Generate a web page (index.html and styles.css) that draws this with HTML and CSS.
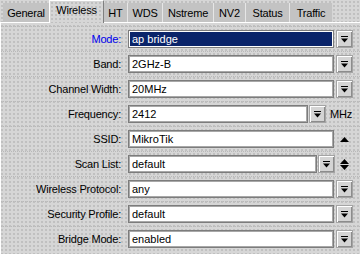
FILE: index.html
```html
<!DOCTYPE html>
<html>
<head>
<meta charset="utf-8">
<link rel="stylesheet" href="styles.css">
</head>
<body>
<div class="win">
  <div class="tabs">
    <div class="tab t-general">General</div>
    <div class="tab active t-wireless">Wireless</div>
    <div class="tab t-ht">HT</div>
    <div class="tab t-wds">WDS</div>
    <div class="tab t-nstreme">Nstreme</div>
    <div class="tab t-nv2">NV2</div>
    <div class="tab t-status">Status</div>
    <div class="tab t-traffic">Traffic</div>
  </div>
  <div class="panel">
    <div class="row">
      <div class="label blue">Mode:</div>
      <div class="field">
        <div class="input selected">ap bridge</div>
        <div class="btn"><svg width="7" height="8" viewBox="0 0 7 8"><rect x="0" y="0" width="7" height="1" fill="#000"/><polygon points="0,2.5 7,2.5 3.5,6.5" fill="#000"/></svg></div>
      </div>
    </div>
    <div class="row">
      <div class="label">Band:</div>
      <div class="field">
        <div class="input">2GHz-B</div>
        <div class="btn"><svg width="7" height="8" viewBox="0 0 7 8"><rect x="0" y="0" width="7" height="1" fill="#000"/><polygon points="0,2.5 7,2.5 3.5,6.5" fill="#000"/></svg></div>
      </div>
    </div>
    <div class="row">
      <div class="label">Channel Width:</div>
      <div class="field">
        <div class="input">20MHz</div>
        <div class="btn"><svg width="7" height="8" viewBox="0 0 7 8"><rect x="0" y="0" width="7" height="1" fill="#000"/><polygon points="0,2.5 7,2.5 3.5,6.5" fill="#000"/></svg></div>
      </div>
    </div>
    <div class="row">
      <div class="label">Frequency:</div>
      <div class="field">
        <div class="input">2412</div>
        <div class="btn narrow-gap"><svg width="7" height="8" viewBox="0 0 7 8"><rect x="0" y="0" width="7" height="1" fill="#000"/><polygon points="0,2.5 7,2.5 3.5,6.5" fill="#000"/></svg></div>
        <div class="unit">MHz</div>
      </div>
    </div>
    <div class="row">
      <div class="label">SSID:</div>
      <div class="field">
        <div class="input">MikroTik</div>
        <div class="side"><svg width="9" height="5" viewBox="0 0 9 5"><polygon points="0,5 9,5 4.5,0" fill="#000"/></svg></div>
      </div>
    </div>
    <div class="row">
      <div class="label">Scan List:</div>
      <div class="field">
        <div class="input">default</div>
        <div class="btn narrow-gap"><svg width="7" height="8" viewBox="0 0 7 8"><rect x="0" y="0" width="7" height="1" fill="#000"/><polygon points="0,2.5 7,2.5 3.5,6.5" fill="#000"/></svg></div>
        <div class="side small"><svg width="9" height="11" viewBox="0 0 9 11"><polygon points="0,5 9,5 4.5,0" fill="#000"/><polygon points="0,6 9,6 4.5,11" fill="#000"/></svg></div>
      </div>
    </div>
    <div class="row">
      <div class="label">Wireless Protocol:</div>
      <div class="field">
        <div class="input">any</div>
        <div class="btn"><svg width="7" height="8" viewBox="0 0 7 8"><rect x="0" y="0" width="7" height="1" fill="#000"/><polygon points="0,2.5 7,2.5 3.5,6.5" fill="#000"/></svg></div>
      </div>
    </div>
    <div class="row">
      <div class="label">Security Profile:</div>
      <div class="field">
        <div class="input">default</div>
        <div class="btn"><svg width="7" height="8" viewBox="0 0 7 8"><rect x="0" y="0" width="7" height="1" fill="#000"/><polygon points="0,2.5 7,2.5 3.5,6.5" fill="#000"/></svg></div>
      </div>
    </div>
    <div class="row">
      <div class="label">Bridge Mode:</div>
      <div class="field">
        <div class="input">enabled</div>
        <div class="btn"><svg width="7" height="8" viewBox="0 0 7 8"><rect x="0" y="0" width="7" height="1" fill="#000"/><polygon points="0,2.5 7,2.5 3.5,6.5" fill="#000"/></svg></div>
      </div>
    </div>
  </div>
</div>
</body>
</html>
```

FILE: styles.css
```css
html, body {
  margin: 0;
  padding: 0;
}
body {
  width: 360px;
  height: 254px;
  overflow: hidden;
  font-family: "Liberation Sans", Arial, sans-serif;
  font-size: 11px;
  color: #000;
  background-color: #d6d6d6;
  background-image: radial-gradient(circle, #bfbfbf 0.7px, transparent 0.9px);
  background-size: 4px 4px;
}
.win {
  width: 360px;
  height: 254px;
  display: flex;
  flex-direction: column;
}
.tabs {
  height: 22px;
  display: flex;
  align-items: flex-end;
  padding-left: 3px;
  box-sizing: border-box;
}
.tab {
  height: 19px;
  box-sizing: border-box;
  background: #c3c3c3;
  border-left: 1px solid #e6e6e6;
  display: flex;
  align-items: center;
  justify-content: center;
  padding-top: 1px;
  letter-spacing: -0.2px;
}
.tab:first-child {
  border-left: none;
}
.tab.active {
  height: 23px;
  margin-bottom: -1px;
  position: relative;
  z-index: 2;
  background-color: #d6d6d6;
  background-image: radial-gradient(circle, #bfbfbf 0.7px, transparent 0.9px);
  background-size: 4px 4px;
  border-left: 1px solid #fff;
  border-top: 1px solid #fff;
  border-right: 1px solid #808080;
  padding-top: 0;
  padding-bottom: 5px;
}
.t-general { width: 46px; }
.t-wireless { width: 55px; }
.t-ht { width: 23px; border-left: none; }
.t-wds { width: 35px; }
.t-nstreme { width: 51px; }
.t-nv2 { width: 32px; }
.t-status { width: 44px; }
.t-traffic { width: 43px; }
.panel {
  flex: 1;
  border-top: 1px solid #fff;
  border-left: 1px solid #fff;
  padding-top: 3px;
}
.row {
  display: flex;
  align-items: center;
  height: 25px;
  box-sizing: border-box;
  border-top: 1px dotted #b9b9b9;
  padding: 3px 7px 3px 0;
}
.label {
  width: 120px;
  text-align: right;
  margin-right: 7px;
  letter-spacing: -0.2px;
  white-space: nowrap;
}
.label.blue {
  color: #0000ee;
}
.field {
  flex: 1;
  display: flex;
  align-items: center;
  height: 18px;
}
.input {
  flex: 1;
  height: 18px;
  box-sizing: border-box;
  background: #fff;
  border: 1px solid #7c7c7c;
  box-shadow: inset 0 0 0 1px #a8a8a8;
  padding-left: 3px;
  line-height: 16px;
  white-space: nowrap;
  overflow: hidden;
}
.input.selected {
  background: #0a246a;
  color: #fff;
  box-shadow: inset 0 0 0 1px #fff;
}
.btn {
  width: 17px;
  height: 18px;
  margin-left: 2px;
  box-sizing: border-box;
  background: #d4d4d4;
  border: 1px solid #a4a4a4;
  box-shadow: inset 1px 1px 0 #fff, inset -1px -1px 0 #8c8c8c;
  display: flex;
  align-items: center;
  justify-content: center;
}
.btn.narrow-gap {
  margin-left: 1px;
}
.btn svg {
  display: block;
  margin-top: 1px;
}
.unit {
  width: 27px;
  box-sizing: border-box;
  padding-left: 4px;
  letter-spacing: -0.2px;
}
.side {
  width: 19px;
  display: flex;
  justify-content: center;
  padding-left: 2px;
  box-sizing: border-box;
}
.side.small {
  width: 18px;
  padding-left: 1px;
}
.side svg {
  display: block;
}
```
